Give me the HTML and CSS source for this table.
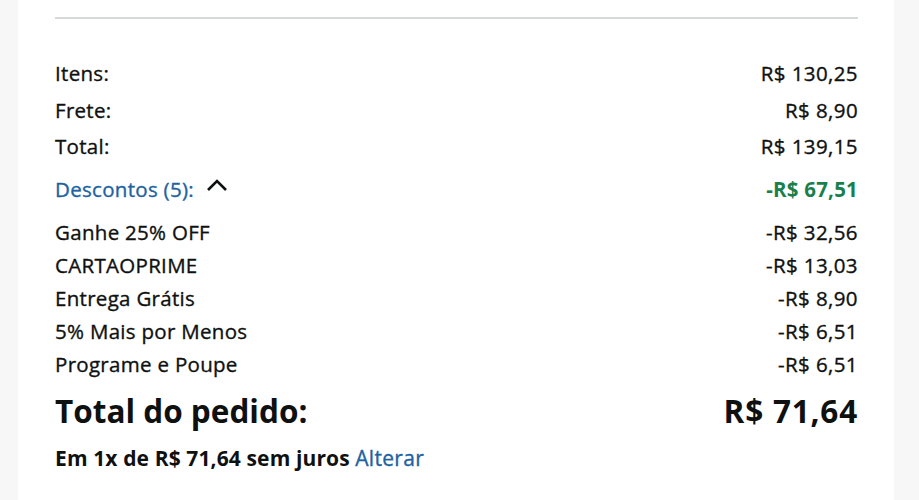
FILE: index.html
```html
<!DOCTYPE html>
<html lang="pt-BR">
<head>
<meta charset="utf-8">
<link rel="stylesheet" href="styles.css">
</head>
<body>
<div class="card">
  <hr class="divider">
  <div class="summary">
    <div class="row main"><span>Itens:</span><span class="num">R$ 130,25</span></div>
    <div class="row main"><span>Frete:</span><span class="num">R$ 8,90</span></div>
    <div class="row main"><span>Total:</span><span class="num">R$ 139,15</span></div>
    <div class="row disc-head">
      <span class="link">Descontos (5):
        <svg class="chev" width="22" height="14" viewBox="0 0 22 14"><path d="M2 12 L11 3 L20 12" fill="none" stroke="#0f1111" stroke-width="2.6"/></svg>
      </span>
      <span class="green num">-R$ 67,51</span>
    </div>
    <div class="discounts">
      <div class="row"><span>Ganhe 25% OFF</span><span class="num">-R$ 32,56</span></div>
      <div class="row"><span>CARTAOPRIME</span><span class="num">-R$ 13,03</span></div>
      <div class="row"><span>Entrega Grátis</span><span class="num">-R$ 8,90</span></div>
      <div class="row"><span>5% Mais por Menos</span><span class="num">-R$ 6,51</span></div>
      <div class="row"><span>Programe e Poupe</span><span class="num">-R$ 6,51</span></div>
    </div>
    <div class="row grand"><span>Total do pedido:</span><span class="num">R$ 71,64</span></div>
    <div class="install"><span class="strong">Em 1x de R$ 71,64 sem juros</span> <span class="link alt">Alterar</span></div>
  </div>
</div>
</body>
</html>
```
FILE: styles.css
```css
html, body {
  margin: 0;
  padding: 0;
  background: #f7f7f7;
  height: 100%;
}
body {
  font-family: "Open Sans", "Noto Sans", sans-serif;
  color: #0f1111;
}
.card {
  background: #fff;
  margin: 0 25px 0 18px;
  padding: 17px 36px 0 37px;
  height: 500px;
  box-sizing: border-box;
}
.divider {
  border: 0;
  border-top: 2px solid #d5d9d9;
  margin: 0;
}
.summary {
  padding-top: 41px;
}
.row {
  display: flex;
  justify-content: space-between;
  align-items: center;
  font-size: 20.5px;
  line-height: 26px;
  letter-spacing: 0.3px;
  -webkit-text-stroke: 0.35px currentColor;
}
.num {
  letter-spacing: 0.4px;
}
.row.main {
  height: 36.5px;
  align-items: flex-start;
}
.disc-head {
  height: 26px;
  margin-top: 6px;
  margin-bottom: 13.5px;
}
.link {
  color: #2162a1;
  display: inline-flex;
  align-items: center;
}
.chev {
  margin-left: 12px;
  margin-top: -7px;
}
.row .green {
  color: #1a7f4c;
  font-weight: 700;
  letter-spacing: 0.2px;
  -webkit-text-stroke: 0;
}
.discounts .row {
  height: 33px;
}
.grand {
  font-size: 31.5px;
  font-weight: 700;
  line-height: 40px;
  margin-top: 10.5px;
  letter-spacing: 0;
  -webkit-text-stroke: 0;
}
.grand .num {
  letter-spacing: 0.8px;
}
.install {
  font-size: 21px;
  line-height: 26px;
  margin-top: 14px;
}
.install .strong {
  font-weight: 700;
  letter-spacing: 0.12px;
}
.install .alt {
  font-weight: 400;
  letter-spacing: 0.3px;
  -webkit-text-stroke: 0.35px currentColor;
}
```
